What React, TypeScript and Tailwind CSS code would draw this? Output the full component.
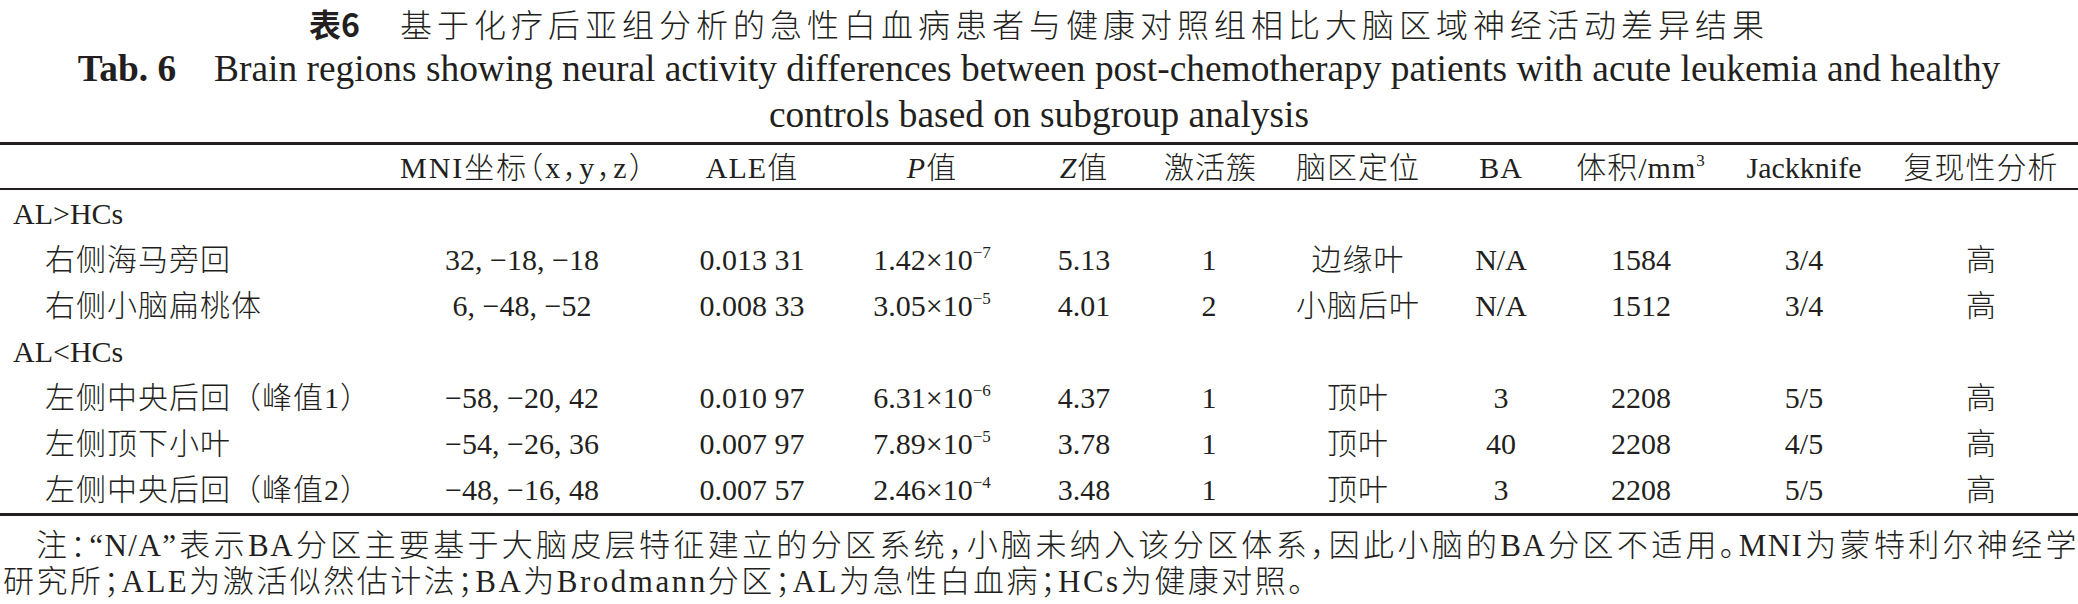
import React from "react";

type Row = {
    name: string;
    mni: string;
    ale: string;
    p: [string, string];
    z: string;
    cluster: string;
    region: string;
    ba: string;
    volume: string;
    jack: string;
    repro: string;
};

const groups: { title: string; rows: Row[] }[] = [
    {
        title: "AL>HCs",
        rows: [
            { name: "右侧海马旁回", mni: "32, −18, −18", ale: "0.013 31", p: ["1.42", "−7"], z: "5.13", cluster: "1", region: "边缘叶", ba: "N/A", volume: "1584", jack: "3/4", repro: "高" },
            { name: "右侧小脑扁桃体", mni: "6, −48, −52", ale: "0.008 33", p: ["3.05", "−5"], z: "4.01", cluster: "2", region: "小脑后叶", ba: "N/A", volume: "1512", jack: "3/4", repro: "高" },
        ],
    },
    {
        title: "AL<HCs",
        rows: [
            { name: "左侧中央后回（峰值1）", mni: "−58, −20, 42", ale: "0.010 97", p: ["6.31", "−6"], z: "4.37", cluster: "1", region: "顶叶", ba: "3", volume: "2208", jack: "5/5", repro: "高" },
            { name: "左侧顶下小叶", mni: "−54, −26, 36", ale: "0.007 97", p: ["7.89", "−5"], z: "3.78", cluster: "1", region: "顶叶", ba: "40", volume: "2208", jack: "4/5", repro: "高" },
            { name: "左侧中央后回（峰值2）", mni: "−48, −16, 48", ale: "0.007 57", p: ["2.46", "−4"], z: "3.48", cluster: "1", region: "顶叶", ba: "3", volume: "2208", jack: "5/5", repro: "高" },
        ],
    },
];

const cols =
    "grid grid-cols-[400px_244px_216px_144px_160px_90px_208px_78px_202px_124px_212px] items-center whitespace-nowrap";

function Sci({ base, exp }: { base: string; exp: string }) {
    return (
        <span>
            {base}×10
            <sup className="text-[17px] -top-[12px]">{exp}</sup>
        </span>
    );
}

export default function App() {
    return (
        <div className="w-[2078px] h-[604px] overflow-hidden bg-white text-[#231f20] font-['Liberation_Serif','Noto_Sans_CJK_SC',serif]">
            {/* Caption */}
            <div className="text-center">
                <div className="flex h-[46px] items-center justify-center font-['Noto_Sans_CJK_SC',sans-serif] text-[32px] tracking-[5px]">
                    <span className="font-bold tracking-normal">表6</span>
                    <span className="ml-[40px] font-light">
                        基于化疗后亚组分析的急性白血病患者与健康对照组相比大脑区域神经活动差异结果
                    </span>
                </div>
                <div className="h-[46px] text-[37.4px] leading-[46px]">
                    <span className="font-bold">Tab. 6</span>
                    <span className="ml-[38px]">
                        Brain regions showing neural activity differences between post-chemotherapy patients with acute leukemia and healthy
                    </span>
                </div>
                <div className="h-[46px] text-[37.4px] leading-[46px]">controls based on subgroup analysis</div>
            </div>

            {/* Table */}
            <div className="mt-[4px] h-[3px] bg-[#231f20]" />
            <div className={`${cols} h-[43px] text-center text-[30px] font-light tracking-[1px]`}>
                <div />
                <div className="tracking-[2px] [font-feature-settings:'halt']">MNI坐标（x，y，z）</div>
                <div>ALE值</div>
                <div>
                    <i>P</i>值
                </div>
                <div>
                    <i>Z</i>值
                </div>
                <div>激活簇</div>
                <div>脑区定位</div>
                <div>BA</div>
                <div>
                    体积/mm<sup className="text-[17px] -top-[12px]">3</sup>
                </div>
                <div className="tracking-normal">Jackknife</div>
                <div className="pl-[18px]">复现性分析</div>
            </div>
            <div className="h-[1.5px] bg-[#231f20]" />

            <div className="pt-[1px] text-[30px] font-light">
                {groups.map((g) => (
                    <div key={g.title}>
                        <div className="flex h-[46px] items-center pl-[13px]">{g.title}</div>
                        {g.rows.map((r) => (
                            <div key={r.name} className={`${cols} h-[46px] text-center`}>
                                <div className="pl-[45px] text-left tracking-[1px]">{r.name}</div>
                                <div>{r.mni}</div>
                                <div>{r.ale}</div>
                                <div>
                                    <Sci base={r.p[0]} exp={r.p[1]} />
                                </div>
                                <div>{r.z}</div>
                                <div>{r.cluster}</div>
                                <div className="tracking-[1px]">{r.region}</div>
                                <div>{r.ba}</div>
                                <div>{r.volume}</div>
                                <div>{r.jack}</div>
                                <div className="pl-[18px]">{r.repro}</div>
                            </div>
                        ))}
                    </div>
                ))}
            </div>
            <div className="h-[3px] bg-[#231f20]" />

            {/* Note */}
            <div className="pt-[7px] text-[31px] font-light [font-feature-settings:'halt']">
                <div className="h-[45px] pl-[36px] text-justify leading-[45px] tracking-[1.5px] [text-align-last:justify]">
                    注：“N/A”表示BA分区主要基于大脑皮层特征建立的分区系统，小脑未纳入该分区体系，因此小脑的BA分区不适用。MNI为蒙特利尔神经学
                </div>
                <div className="-mt-[3px] h-[34px] pl-[3px] leading-[34px] tracking-[2.5px]">
                    研究所；ALE为激活似然估计法；BA为Brodmann分区；AL为急性白血病；HCs为健康对照。
                </div>
            </div>
        </div>
    );
}
